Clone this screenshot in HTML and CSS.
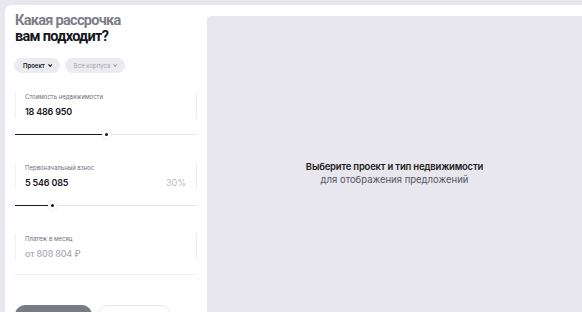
FILE: index.html
```html
<!DOCTYPE html>
<html lang="ru">
<head>
<meta charset="utf-8">
<link rel="stylesheet" href="styles.css">
</head>
<body>
<div class="card">
  <aside class="side">
    <h1 class="title"><span class="title-muted">Какая рассрочка</span><br>вам подходит?</h1>
    <div class="chips">
      <button class="chip chip-active">Проект <span class="caret"></span></button>
      <button class="chip chip-muted">Все корпуса <span class="caret"></span></button>
    </div>

    <div class="group">
      <div class="field">
        <div class="label">Стоимость недвижимости</div>
        <div class="value">18 486 950</div>
      </div>
      <div class="slider"><div class="fill" style="width:91px"></div><div class="knob" style="left:87px"></div></div>
    </div>

    <div class="group">
      <div class="field">
        <div class="label">Первоначальный взнос</div>
        <div class="value-row"><span class="value">5 546 085</span><span class="percent">30%</span></div>
      </div>
      <div class="slider"><div class="fill" style="width:36px"></div><div class="knob" style="left:33px"></div></div>
    </div>

    <div class="group">
      <div class="field">
        <div class="label">Платеж в месяц</div>
        <div class="value value-muted">от 808 804 ₽</div>
      </div>
      <div class="divider"></div>
    </div>

    <div class="actions">
      <button class="btn btn-primary"></button>
      <button class="btn btn-outline"></button>
    </div>
  </aside>
  <main class="panel">
    <p class="empty-title">Выберите проект и тип недвижимости</p>
    <p class="empty-sub">для отображения предложений</p>
  </main>
</div>
</body>
</html>
```
FILE: styles.css
```css
* { box-sizing: border-box; }
html, body { margin: 0; height: 100%; }
body {
  background: #e8e7ed;
  padding: 5px 0 0 5px;
  font-family: Inter, "Noto Sans", sans-serif;
  overflow: hidden;
}
.card {
  background: #fff;
  border-radius: 6px 0 0 0;
  display: flex;
  height: 320px;
}
.side {
  width: 202px;
  flex: none;
  padding: 8px 10px 0 10px;
}
.title {
  margin: 0;
  font-family: Roboto, Inter, sans-serif;
  font-size: 14.5px;
  line-height: 16px;
  font-weight: 700;
  letter-spacing: -0.7px;
  color: #16161c;
}
.title-muted { color: #7d7d87; }
.chips {
  display: flex;
  gap: 5px;
  margin-top: 13px;
  margin-left: -1px;
}
.chip {
  border: 0;
  border-radius: 8px;
  height: 15px;
  padding: 0 9px;
  background: #ecebf0;
  font-family: inherit;
  font-size: 6px;
  display: flex;
  align-items: center;
  gap: 3px;
}
.chip-active { color: #16161c; font-weight: 600; }
.chip-muted { color: #a3a3ad; font-weight: 400; }
.caret {
  width: 3px; height: 3px;
  border-right: 0.8px solid currentColor;
  border-bottom: 0.8px solid currentColor;
  transform: rotate(45deg) translateY(-1px);
}
.group { margin-top: 28px; }
.chips + .group { margin-top: 19px; }
.field {
  border-left: 1px solid #f1f1f4;
  border-right: 1px solid #ececf0;
  padding: 1px 9px 0 9px;
  height: 26px;
}
.label {
  font-size: 6px;
  color: #6e6e78;
  line-height: 7px;
}
.value {
  font-size: 9px;
  font-weight: 600;
  color: #16161c;
  line-height: 12px;
  letter-spacing: -0.2px;
  display: block;
}
.field > .value, .value-row { margin-top: 6px; }
.value-row { display: flex; justify-content: space-between; align-items: baseline; }
.percent { font-size: 9px; color: #b8b8c0; margin-right: 1px; }
.value-muted { color: #a9a9b2; font-weight: 500; }
.slider {
  position: relative;
  height: 1px;
  background: #e6e6ea;
  margin-top: 16px;
}
.fill {
  height: 1px;
  background: #1a1a20;
}
.knob {
  position: absolute;
  top: -4px;
  width: 9px; height: 9px;
  border-radius: 50%;
  background: #fff;
  box-shadow: 0 0 2px rgba(0,0,0,0.2);
}
.knob::after {
  content: "";
  position: absolute;
  left: 3px; top: 3px;
  width: 3px; height: 3px;
  border-radius: 50%;
  background: #16161c;
}
.divider { height: 1px; background: #eeeef1; margin-top: 14px; }
.actions {
  display: flex;
  gap: 6px;
  margin-top: 30px;
}
.btn {
  height: 20px;
  border-radius: 10px;
  font-family: inherit;
}
.btn-primary { width: 77px; background: #7b7b86; border: 0; }
.btn-outline { width: 73px; background: #fff; border: 1px solid #e6e6ea; }
.panel {
  flex: 1;
  margin-top: 11px;
  background: #e8e7ed;
  border-radius: 4px 0 0 0;
  display: flex;
  flex-direction: column;
  justify-content: center;
  align-items: center;
  padding-top: 4px;
}
.panel p { margin: 0; }
.empty-title {
  font-size: 9.5px;
  font-weight: 600;
  color: #1c1c22;
  letter-spacing: -0.2px;
  line-height: 13px;
}
.empty-sub {
  font-size: 9.5px;
  color: #55555e;
  line-height: 13px;
}
```
